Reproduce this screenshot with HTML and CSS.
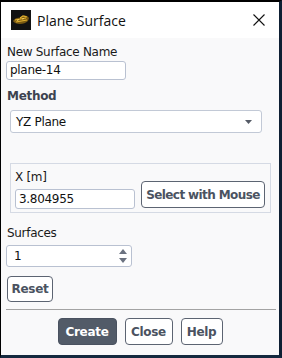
FILE: index.html
```html
<!DOCTYPE html>
<html>
<head>
<meta charset="utf-8">
<link rel="stylesheet" href="styles.css">
</head>
<body>
<div class="frame">
  <div class="titlebar">
    <svg class="app-icon" width="20" height="20" viewBox="0 0 20 20">
      <rect width="20" height="20" fill="#121212"/>
      <path d="M2 11 C4 8 7 7 9 8 L12 6 C14 5 17 6 18 8 L17 11 C15 13 12 14 9 14 C6 14 3 13 2 11 Z" fill="#7a5a12"/>
      <path d="M4 10 L15 8 M5 12 L16 10 M9 8 L12 6 L16 7" stroke="#e0b030" stroke-width="1.2" fill="none"/>
      <path d="M6 10.5 L8 9.5 M11 9 L13 8.5" stroke="#f5d060" stroke-width="1" fill="none"/>
    </svg>
    <span class="title">Plane Surface</span>
    <svg class="close" width="12" height="12" viewBox="0 0 12 12">
      <path d="M0.5 0.5 L11.5 11.5 M11.5 0.5 L0.5 11.5" stroke="#111" stroke-width="1.1" fill="none"/>
    </svg>
  </div>
  <div class="content">
    <div class="label l-name">New Surface Name</div>
    <div class="input in-name">plane-14</div>
    <div class="label bold l-method">Method</div>
    <div class="select">
      <span>YZ Plane</span>
      <svg width="7" height="4" viewBox="0 0 7 4"><path d="M0 0 L7 0 L3.5 4 Z" fill="#555b66"/></svg>
    </div>
    <div class="group">
      <div class="col">
        <div class="label">X [m]</div>
        <div class="input in-x">3.804955</div>
      </div>
      <div class="btn btn-mouse">Select with Mouse</div>
    </div>
    <div class="label l-surf">Surfaces</div>
    <div class="input spinner">
      <span>1</span>
      <div class="spin">
        <svg width="8" height="5" viewBox="0 0 8 5"><path d="M0 5 L8 5 L4 0 Z" fill="#6b7280"/></svg>
        <svg width="8" height="5" viewBox="0 0 8 5"><path d="M0 0 L8 0 L4 5 Z" fill="#6b7280"/></svg>
      </div>
    </div>
    <div class="btn btn-reset">Reset</div>
    <div class="sep"></div>
    <div class="actions">
      <div class="btn primary b-create">Create</div>
      <div class="btn b-close">Close</div>
      <div class="btn b-help">Help</div>
    </div>
  </div>
</div>
</body>
</html>
```
FILE: styles.css
```css
html, body {
  margin: 0;
  padding: 0;
  background: #000;
}
body {
  width: 282px;
  height: 358px;
  overflow: hidden;
  font-family: "DejaVu Sans", sans-serif;
  font-size: 12px;
  letter-spacing: -0.3px;
  color: #1a1a1a;
}
.frame {
  box-sizing: border-box;
  width: 282px;
  height: 358px;
  border-top: 2px solid #000;
  border-left: 1px solid #000;
  border-right: 3px solid #0e1f33;
  border-bottom: 3px solid #15293f;
  background: #f9f9fa;
  display: flex;
  flex-direction: column;
}
.titlebar {
  height: 36px;
  background: #fff;
  display: flex;
  align-items: center;
  padding-left: 10px;
  padding-right: 14px;
}
.app-icon { flex: none; }
.title {
  font-family: "Open Sans", sans-serif;
  font-size: 14px;
  letter-spacing: 0;
  color: #111;
  margin-left: 6px;
  flex: 1;
}
.close { flex: none; }
.content {
  display: flex;
  flex-direction: column;
  align-items: flex-start;
  padding: 0 3px 0 5px;
}
.label {
  line-height: 14px;
  height: 14px;
  white-space: nowrap;
  margin-left: 1px;
}
.bold { font-weight: bold; color: #3d4350; }
.l-name { margin-top: 7px; }
.input {
  box-sizing: border-box;
  background: #fff;
  border: 1px solid #b9c1d1;
  border-radius: 3px;
  line-height: 17px;
  padding-left: 3px;
  color: #111;
}
.in-name { margin-top: 2px; width: 120px; height: 19px; }
.l-method { margin-top: 9px; }
.select {
  box-sizing: border-box;
  margin-top: 7px;
  margin-left: 4px;
  width: 252px;
  height: 23px;
  background: #fff;
  border: 1px solid #c2c9d6;
  border-radius: 3px;
  display: flex;
  align-items: center;
  justify-content: space-between;
  padding: 0 9px 0 5px;
  color: #111;
}
.group {
  box-sizing: border-box;
  margin-top: 30px;
  margin-left: 4px;
  width: 261px;
  height: 50px;
  border: 1px solid #d5dae4;
  padding: 6px 0 3px 4px;
  display: flex;
  align-items: flex-end;
  gap: 6px;
}
.col { display: flex; flex-direction: column; }
.col .label { margin-left: 0; margin-bottom: 5px; }
.in-x { width: 120px; height: 20px; line-height: 18px; }
.btn {
  box-sizing: border-box;
  border: 1px solid #5c6472;
  border-radius: 4px;
  background: #fff;
  color: #4b5361;
  font-weight: bold;
  height: 27px;
  display: flex;
  align-items: center;
  justify-content: center;
  white-space: nowrap;
}
.btn-mouse { width: 124px; margin-bottom: 1px; letter-spacing: -0.6px; }
.l-surf { margin-top: 13px; }
.spinner {
  margin-top: 5px;
  width: 126px;
  height: 22px;
  display: flex;
  align-items: center;
  justify-content: space-between;
  padding: 0 4px 0 7px;
}
.spin { display: flex; flex-direction: column; gap: 4px; }
.spin svg { display: block; }
.btn-reset { margin-top: 9px; margin-left: 1px; width: 46px; height: 26px; }
.sep {
  margin-top: 7px;
  width: 270px;
  height: 1px;
  background: #a3a3a3;
}
.actions {
  margin-top: 8px;
  align-self: stretch;
  display: flex;
  justify-content: center;
  gap: 8px;
  padding-right: 2px;
}
.primary { background: #525b68; color: #fff; border-color: #4a5260; }
.b-create { width: 59px; }
.b-close { width: 48px; }
.b-help { width: 42px; }
```
